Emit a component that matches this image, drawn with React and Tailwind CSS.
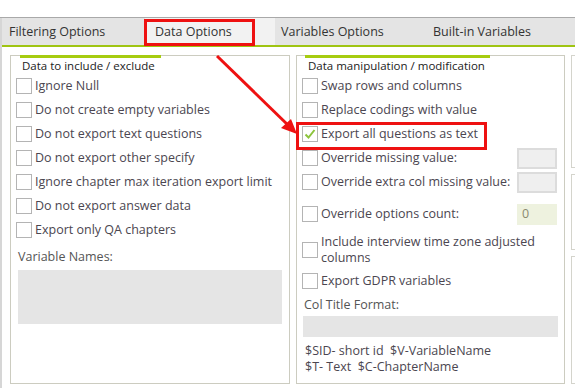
import React from 'react';

function Box({ checked }) {
  return (
    <span className="w-[16px] h-[16px] shrink-0 border border-[#b4b4b4] bg-white flex items-center justify-center">
      {checked && (
        <svg width="12" height="12" viewBox="0 0 12 12">
          <path d="M1.5 6.5 L4.5 9.5 L10.5 2" fill="none" stroke="#8cc43c" strokeWidth="2" />
        </svg>
      )}
    </span>
  );
}

function Check({ label, checked }) {
  return (
    <div className="h-[24px] flex items-center gap-[3px]">
      <Box checked={checked} />
      <span>{label}</span>
    </div>
  );
}

function SmallInput({ value, tinted }) {
  return (
    <div
      className={
        tinted
          ? 'w-[40px] h-[21px] bg-[#eef2df] text-[#8a8a70] pl-[5px] flex items-center'
          : 'w-[40px] h-[21px] bg-[#efefef] border-2 border-[#dcdcdc]'
      }
    >
      {value}
    </div>
  );
}

export default function App() {
  const left = [
    'Ignore Null',
    'Do not create empty variables',
    'Do not export text questions',
    'Do not export other specify',
    'Ignore chapter max iteration export limit',
    'Do not export answer data',
    'Export only QA chapters',
  ];

  return (
    <div
      className="relative w-[575px] h-[388px] overflow-hidden bg-white text-[12.5px] text-[#4b4650]"
      style={{ fontFamily: '"Open Sans", "Noto Sans", sans-serif' }}
    >
      <div className="h-[18px] border-b border-[#a9a9a9]"></div>

      <div className="border-l-2 border-[#d6d6d6] h-[370px] flex flex-col">
        {/* tab bar */}
        <div className="h-[29px] pt-[2px] bg-[#e4e4e4] border-b-2 border-[#9fc412] flex items-stretch text-[12.5px] text-[#333]">
          <div className="w-[143px] pl-[7px] flex items-center">Filtering Options</div>
          <div className="w-[130px] pl-[10px] -mt-[2px] bg-[#f2f2f2] flex items-center pt-[2px]">Data Options</div>
          <div className="w-[152px] pl-[6px] flex items-center">Variables Options</div>
          <div className="pl-[6px] flex items-center">Built-in Variables</div>
        </div>

        {/* body */}
        <div className="flex-1 flex gap-[6px] pl-[8px] pt-[8px]">
          {/* left panel */}
          <div className="w-[280px] h-[329px] border border-[#ccccc0] flex flex-col">
            <div className="ml-[9px] w-[141px] h-[3px] -mt-px bg-[#a6cc10]"></div>
            <div className="pl-[11px] h-[16px] leading-[16px] text-[11.5px] text-[#222]">Data to include / exclude</div>
            <div className="pl-[5px]">
              {left.map((l) => (
                <Check key={l} label={l} />
              ))}
            </div>
            <div className="pl-[7px] pt-[6px] h-[28px] text-[#555]">Variable Names:</div>
            <div className="mx-[7px] h-[54px] bg-[#e5e5e5]"></div>
          </div>

          {/* right panel */}
          <div className="w-[269px] h-[329px] border border-[#ccccc0] flex flex-col">
            <div className="ml-[8px] w-[185px] h-[3px] -mt-px bg-[#a6cc10]"></div>
            <div className="pl-[11px] h-[16px] leading-[16px] text-[11.5px] text-[#222]">Data manipulation / modification</div>
            <div className="pl-[5px] pr-[7px]">
              <Check label="Swap rows and columns" />
              <Check label="Replace codings with value" />
              <Check label="Export all questions as text" checked />
              <div className="h-[24px] flex items-center justify-between">
                <div className="flex items-center gap-[3px]">
                  <Box />
                  <span>Override missing value:</span>
                </div>
                <SmallInput />
              </div>
              <div className="h-[24px] flex items-center justify-between">
                <div className="flex items-center gap-[3px]">
                  <Box />
                  <span>Override extra col missing value:</span>
                </div>
                <SmallInput />
              </div>
              <div className="h-[40px] flex items-center justify-between">
                <div className="flex items-center gap-[3px]">
                  <Box />
                  <span>Override options count:</span>
                </div>
                <SmallInput value="0" tinted />
              </div>
              <div className="h-[32px] flex items-center gap-[3px] leading-[16px]">
                <Box />
                <span>
                  Include interview time zone adjusted
                  <br />
                  columns
                </span>
              </div>
              <div className="h-[30px] flex items-center gap-[3px]">
                <Box />
                <span>Export GDPR variables</span>
              </div>
            </div>
            <div className="pl-[7px] h-[18px] flex items-center text-[#555]">Col Title Format:</div>
            <div className="mx-[6px] mt-[2px] h-[21px] bg-[#e5e5e5]"></div>
            <div className="pl-[8px] pt-[6px] leading-[16px] text-[#4b4650]">
              <div className="whitespace-pre">$SID- short id  $V-VariableName</div>
              <div className="whitespace-pre">$T- Text  $C-ChapterName</div>
            </div>
          </div>

          {/* cut off panels on the right */}
          <div className="flex-1 flex flex-col gap-[6px]">
            <div className="h-[113px] border border-r-0 border-[#d4d4cc]"></div>
            <div className="h-[76px] border border-r-0 border-[#d4d4cc]"></div>
            <div className="h-[128px] border border-r-0 border-[#d4d4cc]"></div>
          </div>
        </div>
      </div>

      {/* annotations */}
      <div className="absolute left-[144px] top-[19px] w-[111px] h-[27px] border-[3px] border-[#ee1111]"></div>
      <div className="absolute left-[296px] top-[122px] w-[191px] h-[28px] border-[3px] border-[#ee1111]"></div>
      <svg className="absolute left-0 top-0" width="575" height="388">
        <line x1="217" y1="56" x2="290" y2="127" stroke="#ee1111" strokeWidth="3" />
        <path d="M297 134 L281 128 L291 119 Z" fill="#ee1111" />
      </svg>
    </div>
  );
}
